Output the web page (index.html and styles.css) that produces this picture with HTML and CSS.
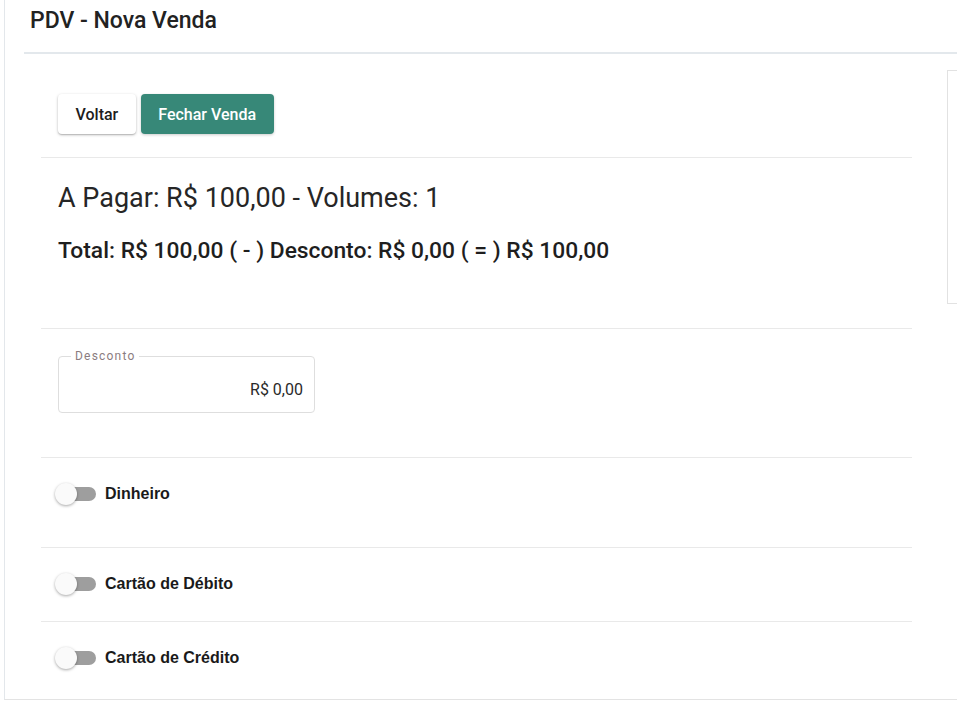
FILE: index.html
```html
<!DOCTYPE html>
<html lang="pt-BR">
<head>
<meta charset="utf-8">
<title>PDV - Nova Venda</title>
<link rel="stylesheet" href="styles.css">
</head>
<body>
<div class="page">
  <div class="wrap">
    <header class="header"><h1 class="title">PDV - Nova Venda</h1></header>
    <div class="row">
      <main class="main">
        <section class="sec sec-actions">
          <button class="btn btn-light">Voltar</button>
          <button class="btn btn-primary">Fechar Venda</button>
        </section>
        <section class="sec sec-summary">
          <h2 class="pay">A Pagar: R$ 100,00 - Volumes: 1</h2>
          <p class="total">Total: R$ 100,00 ( - ) Desconto: R$ 0,00 ( = ) R$ 100,00</p>
        </section>
        <section class="sec sec-field">
          <fieldset class="field">
            <legend class="field-label">Desconto</legend>
            <div class="field-value">R$ 0,00</div>
          </fieldset>
        </section>
        <section class="sec sec-toggle sec-t1">
          <label class="toggle"><span class="track"><span class="thumb"></span></span><span class="toggle-label">Dinheiro</span></label>
        </section>
        <section class="sec sec-toggle sec-t2">
          <label class="toggle"><span class="track"><span class="thumb"></span></span><span class="toggle-label">Cartão de Débito</span></label>
        </section>
        <section class="sec sec-toggle sec-t3">
          <label class="toggle"><span class="track"><span class="thumb"></span></span><span class="toggle-label">Cartão de Crédito</span></label>
        </section>
      </main>
      <aside class="aside"></aside>
    </div>
  </div>
</div>
</body>
</html>
```
FILE: styles.css
```css
html, body { margin: 0; padding: 0; background: #fff; overflow: hidden; }
body { font-family: Roboto, "Liberation Sans", sans-serif; color: #212121; }
.page {
  margin-left: 4px;
  border-left: 1px solid #e3e7eb;
  border-bottom: 1px solid #e3e3e3;
}
.wrap { padding-left: 19px; }
.header {
  height: 52px;
  border-bottom: 2px solid #e3e8ec;
  display: flex;
  align-items: flex-start;
}
.title {
  margin: 6px 0 0 6px;
  font-size: 23px;
  font-weight: 500;
  color: #222;
  line-height: 30px;
}
.row { display: flex; align-items: flex-start; }
.main { flex: 0 0 871px; padding: 16px 17px 0; }
.aside {
  flex: 0 0 300px;
  margin-top: 16px;
  margin-left: 18px;
  height: 232px;
  border: 1px solid #e2e2e2;
  border-right: 0;
}
.sec { padding: 0 17px; border-bottom: 1px solid #e9e9e9; }
.sec:last-child { border-bottom: 0; }
.sec-actions { padding-top: 24px; padding-bottom: 23px; display: flex; gap: 5px; }
.btn {
  height: 40px;
  border: 0;
  border-radius: 4px;
  font-family: Roboto, sans-serif;
  font-size: 16px;
  font-weight: 500;
  padding: 0 17.5px;
  cursor: pointer;
}
.btn-light {
  background: #fff;
  color: #1d1d1d;
  box-shadow: 0 1px 3px rgba(0,0,0,.25), 0 1px 1px rgba(0,0,0,.12);
}
.btn-primary {
  background: #378878;
  color: #fff;
  box-shadow: 0 1px 3px rgba(0,0,0,.2);
}
.sec-summary { padding-top: 25px; padding-bottom: 64px; }
.pay { margin: 0; font-size: 27px; font-weight: 400; line-height: 30px; color: #262626; }
.total { margin: 25px 0 0; font-size: 22.8px; font-weight: 500; line-height: 26px; color: #1e1e1e; }
.sec-field { padding-top: 18px; padding-bottom: 44px; }
.field {
  margin: 0;
  width: 257px;
  box-sizing: border-box;
  height: 66px;
  border: 1px solid #dedede;
  border-radius: 4px;
  padding: 0 11px 0 12px;
}
.field-label {
  margin-left: 0;
  padding: 0 4px;
  font-size: 12px;
  letter-spacing: 1.2px;
  color: #8b7c80;
  line-height: 18px;
}
.field-value {
  text-align: right;
  font-size: 16px;
  color: #2a2a2a;
  line-height: 20px;
  padding-top: 15px;
}
.sec-toggle { padding-top: 24px; }
.sec-t1 { padding-bottom: 41px; }
.sec-t2 { padding-bottom: 25px; }
.sec-t3 { padding-bottom: 29px; }
.toggle { display: flex; align-items: center; height: 24px; gap: 9px; }
.track {
  position: relative;
  width: 39px;
  height: 14px;
  border-radius: 7px;
  background: #9e9e9e;
  margin-left: -1px;
}
.thumb {
  position: absolute;
  left: -2px;
  top: -4px;
  width: 22px;
  height: 22px;
  border-radius: 50%;
  background: #fafafa;
  box-shadow: 0 1px 3px rgba(0,0,0,.35);
}
.toggle-label {
  font-family: "Liberation Sans", Arial, sans-serif;
  font-weight: 700;
  font-size: 16px;
  color: #1a1a1a;
}
```
